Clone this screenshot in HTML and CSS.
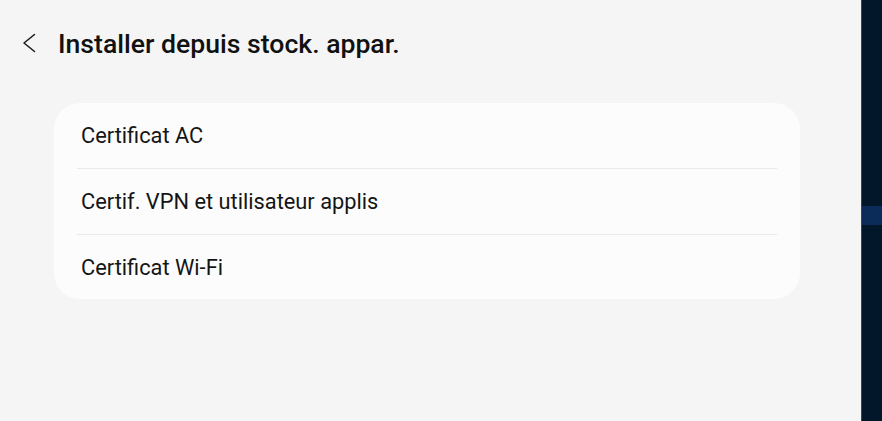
FILE: index.html
```html
<!DOCTYPE html>
<html lang="fr">
<head>
<meta charset="utf-8">
<title>Installer depuis stock. appar.</title>
<link rel="stylesheet" href="styles.css">
</head>
<body>
<div class="screen">
  <main class="main">
    <header class="header">
      <button class="back" aria-label="Retour">
        <svg width="14" height="20" viewBox="0 0 14 20"><polyline points="12.5,1.5 2,10 12.5,18.5" fill="none" stroke="#1c1c1c" stroke-width="1.6" stroke-linecap="round" stroke-linejoin="round"/></svg>
      </button>
      <h1 class="title">Installer depuis stock. appar.</h1>
    </header>
    <section class="card">
      <div class="row">Certificat AC</div>
      <div class="row">Certif. VPN et utilisateur applis</div>
      <div class="row">Certificat Wi-Fi</div>
    </section>
  </main>
  <aside class="side">
    <div class="side-mark"></div>
  </aside>
</div>
</body>
</html>
```

FILE: styles.css
```css
html, body {
  margin: 0;
  padding: 0;
  height: 100%;
}
body {
  background: #f5f5f5;
  font-family: Roboto, "Noto Sans", "Liberation Sans", sans-serif;
  color: #111;
}
.screen {
  display: flex;
  height: 421px;
  width: 882px;
  overflow: hidden;
}
.main {
  flex: 1;
  background: #f5f5f5;
}
.header {
  height: 86px;
  display: flex;
  align-items: center;
  padding-left: 22px;
}
.back {
  border: 0;
  background: none;
  padding: 0;
  width: 14px;
  height: 20px;
  display: flex;
  margin-right: 21px;
}
.title {
  margin: 0;
  margin-left: 1px;
  font-size: 26.6px;
  font-weight: 500;
  color: #111;
}
.card {
  margin: 17px 61px 0 54px;
  background: #fcfcfc;
  border-radius: 26px;
  padding: 0 23px;
}
.row {
  height: 65px;
  display: flex;
  align-items: center;
  padding-left: 4px;
  font-size: 21.8px;
  color: #151515;
  border-bottom: 1px solid #e9e9e9;
}
.row:last-child {
  border-bottom: 0;
  height: 64px;
}
.side {
  width: 21px;
  background: #021729;
  border-left: 1px solid #3b4450;
  box-sizing: border-box;
  padding-top: 206px;
}
.side-mark {
  height: 19px;
  background: #0b2c58;
}
```
